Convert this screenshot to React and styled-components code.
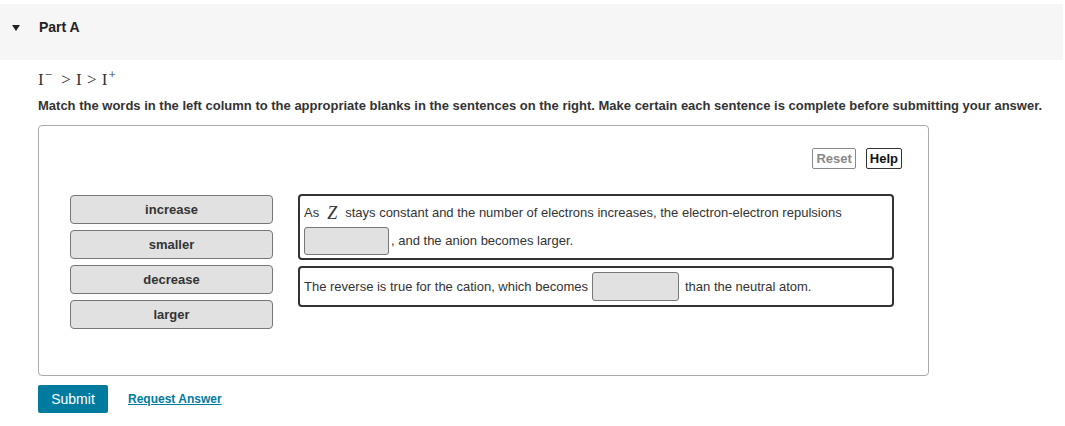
import React from 'react';
import styled, { createGlobalStyle } from 'styled-components';

const GlobalStyle = createGlobalStyle`
  body {
    margin: 0;
    background: #fff;
    font-family: "Liberation Sans", Arial, sans-serif;
    color: #333;
  }
`;

const words = ['increase', 'smaller', 'decrease', 'larger'];

const App = () => {
  return (
    <Page>
      <GlobalStyle />
      <PartHeader>
        <Caret />
        <PartTitle>Part A</PartTitle>
      </PartHeader>
      <Content>
        <Formula>
          I<sup>−</sup> &gt; I &gt; I<sup>+</sup>
        </Formula>
        <Instructions>
          Match the words in the left column to the appropriate blanks in the
          sentences on the right. Make certain each sentence is complete before
          submitting your answer.
        </Instructions>
        <Workspace>
          <Toolbar>
            <ToolButton muted>Reset</ToolButton>
            <ToolButton>Help</ToolButton>
          </Toolbar>
          <MatchArea>
            <WordList>
              {words.map((w) => (
                <WordTile key={w}>{w}</WordTile>
              ))}
            </WordList>
            <Sentences>
              <Sentence tall>
                <Line>
                  As <Var>Z</Var> stays constant and the number of electrons
                  increases, the electron-electron repulsions
                </Line>
                <Line>
                  <Blank />
                  <span>, and the anion becomes larger.</span>
                </Line>
              </Sentence>
              <Sentence>
                <Line>
                  <span>The reverse is true for the cation, which becomes</span>
                  <Blank wide />
                  <span>than the neutral atom.</span>
                </Line>
              </Sentence>
            </Sentences>
          </MatchArea>
        </Workspace>
        <Actions>
          <SubmitButton>Submit</SubmitButton>
          <AnswerLink href='#'>Request Answer</AnswerLink>
        </Actions>
      </Content>
    </Page>
  );
};

export default App;

const Page = styled.div`
  width: 1065px;
  height: 426px;
  padding-top: 4px;
  box-sizing: border-box;
`;

const PartHeader = styled.div`
  width: 1063px;
  height: 56px;
  background: #f6f6f6;
  display: flex;
  align-items: center;
  padding: 0 0 10px 12px;
  box-sizing: border-box;
`;

const Caret = styled.span`
  width: 0;
  height: 0;
  border-left: 4.5px solid transparent;
  border-right: 4.5px solid transparent;
  border-top: 6px solid #222;
  margin-right: 19px;
  margin-top: 1px;
`;

const PartTitle = styled.span`
  font-size: 14px;
  font-weight: 700;
  color: #222;
`;

const Content = styled.div`
  padding-left: 38px;
`;

const Formula = styled.div`
  font-family: "Liberation Serif", "Times New Roman", serif;
  font-size: 17px;
  color: #333;
  margin-top: 9px;
  height: 22px;
  line-height: 22px;
  word-spacing: 1px;
  sup {
    font-size: 13px;
    line-height: 0;
    vertical-align: 6px;
    margin-left: 1px;
    margin-right: 4px;
  }
`;

const Instructions = styled.p`
  margin: 7px 0 0;
  font-size: 13px;
  font-weight: 700;
  line-height: 16px;
  color: #333;
  white-space: nowrap;
`;

const Workspace = styled.div`
  margin-top: 11px;
  width: 891px;
  height: 251px;
  box-sizing: border-box;
  border: 1px solid #aaa;
  border-radius: 4px;
  padding: 22px 26px 0 31px;
`;

const Toolbar = styled.div`
  display: flex;
  justify-content: flex-end;
  gap: 10px;
`;

const ToolButton = styled.button`
  font-family: "Liberation Sans", Arial, sans-serif;
  font-size: 13px;
  font-weight: 700;
  height: 21px;
  padding: 0 3px;
  background: #fff;
  border: 1px solid ${({ muted }) => (muted ? '#8a8a8a' : '#333')};
  border-radius: 2px;
  color: ${({ muted }) => (muted ? '#888' : '#111')};
  line-height: 19px;
`;

const MatchArea = styled.div`
  display: flex;
  align-items: flex-start;
  gap: 25px;
  margin-top: 25px;
`;

const WordList = styled.div`
  display: flex;
  flex-direction: column;
  gap: 6px;
  padding-top: 1px;
`;

const WordTile = styled.div`
  width: 203px;
  height: 29px;
  box-sizing: border-box;
  background: #e1e1e1;
  border: 1.5px solid #777;
  border-radius: 4px;
  font-size: 13px;
  font-weight: 700;
  color: #333;
  text-align: center;
  padding-top: 6px;
`;

const Sentences = styled.div`
  display: flex;
  flex-direction: column;
  gap: 6px;
`;

const Sentence = styled.div`
  width: 596px;
  box-sizing: border-box;
  border: 2px solid #333;
  border-radius: 4px;
  padding: ${({ tall }) => (tall ? '8px 6px 3px 4px' : '4px 6px 4px 4px')};
  font-size: 13px;
  color: #333;
  display: flex;
  flex-direction: column;
  gap: 5px;
`;

const Line = styled.div`
  display: flex;
  align-items: center;
  min-height: 18px;
  line-height: 18px;
  gap: 6px;
  white-space: nowrap;
`;

const Var = styled.i`
  font-family: "Liberation Serif", "Times New Roman", serif;
  font-size: 18px;
  line-height: 1;
  padding: 0 2px;
`;

const Blank = styled.span`
  display: inline-block;
  width: ${({ wide }) => (wide ? '87px' : '85px')};
  height: ${({ wide }) => (wide ? '29px' : '28px')};
  box-sizing: border-box;
  background: #e1e1e1;
  border: 1px solid #777;
  border-radius: 3px;
  margin-left: ${({ wide }) => (wide ? '-2px' : '0')};
  margin-right: ${({ wide }) => (wide ? '0' : '-4px')};
`;

const Actions = styled.div`
  display: flex;
  align-items: center;
  gap: 20px;
  margin-top: 9px;
`;

const SubmitButton = styled.button`
  font-family: "Liberation Sans", Arial, sans-serif;
  font-size: 14px;
  width: 70px;
  height: 28px;
  background: #007ba0;
  border: none;
  border-radius: 2px;
  color: #fff;
`;

const AnswerLink = styled.a`
  font-size: 12px;
  font-weight: 700;
  color: #007ba0;
  text-decoration: underline;
`;
